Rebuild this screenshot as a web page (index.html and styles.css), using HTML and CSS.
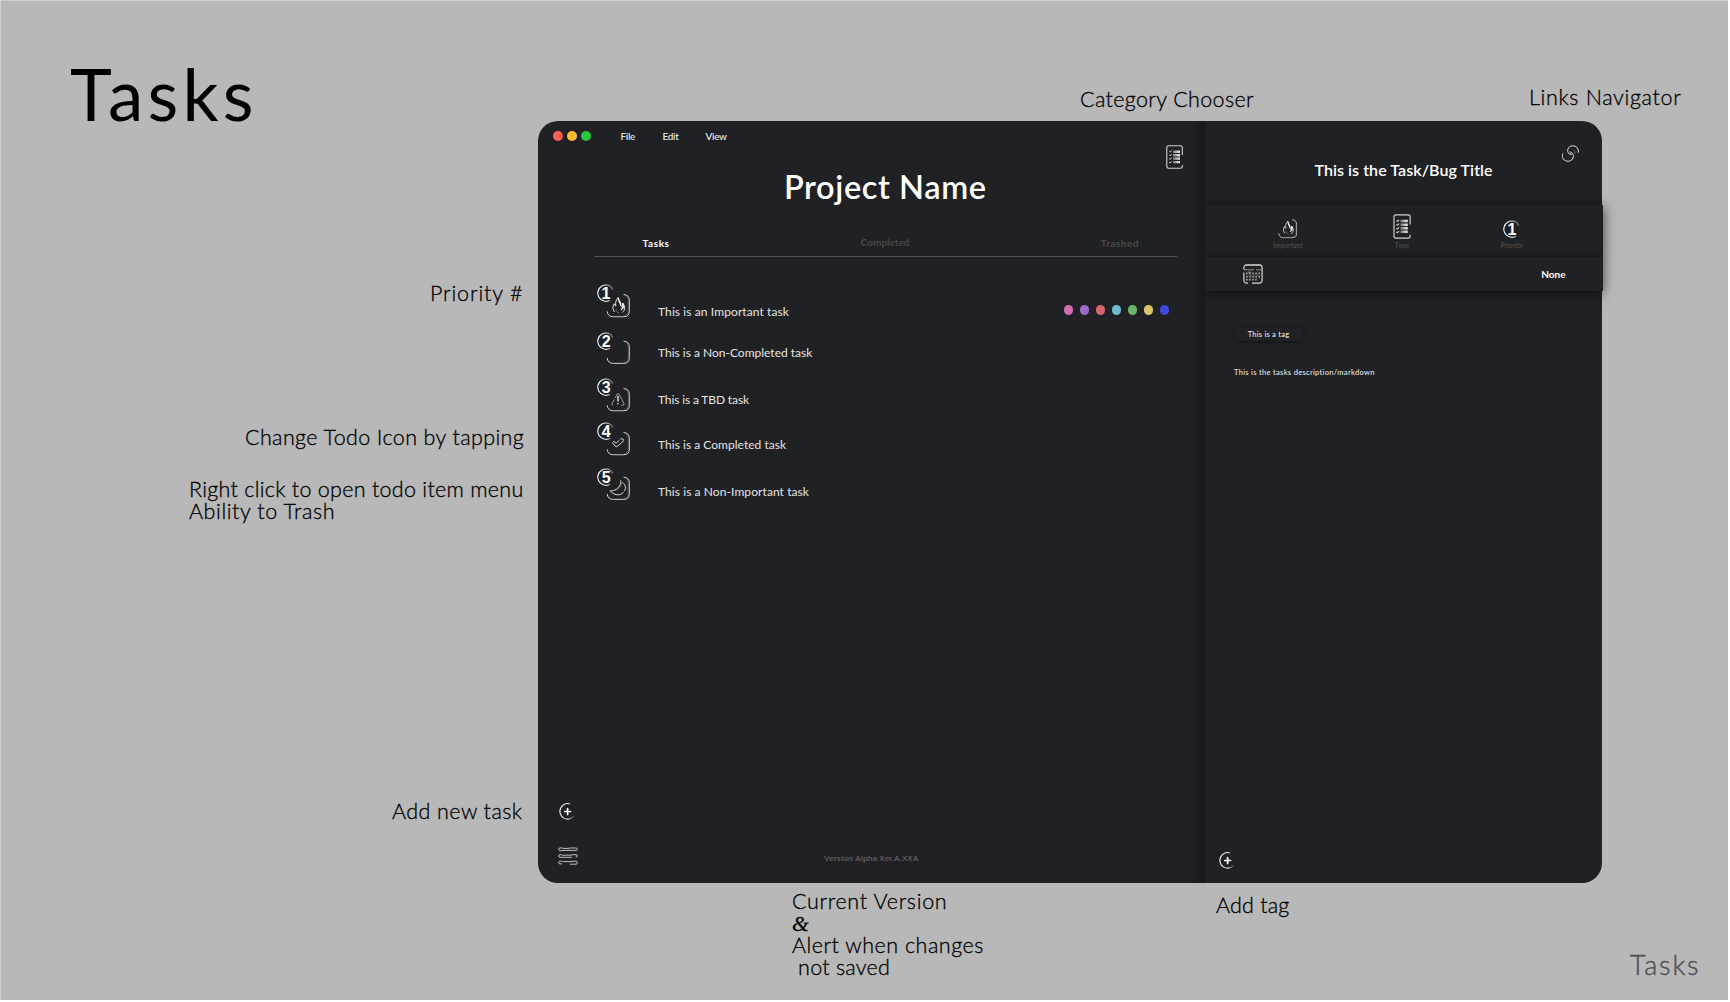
FILE: index.html
```
<!DOCTYPE html>
<html lang="en">
<head>
<meta charset="utf-8">
<title>Tasks</title>
<link rel="stylesheet" href="styles.css">
</head>
<body>
<svg class="defs" width="0" height="0" aria-hidden="true">
  <defs>
    <linearGradient id="fade" x1="0" y1="0" x2="1" y2="0">
      <stop offset="0" stop-color="#fff"/><stop offset=".55" stop-color="#ddd"/><stop offset="1" stop-color="#fff" stop-opacity=".15"/>
    </linearGradient>
    <linearGradient id="rowfill" x1="0" y1="0" x2="1" y2="0">
      <stop offset="0" stop-color="#777"/><stop offset="1" stop-color="#f4f4f4"/>
    </linearGradient>
    <symbol id="ring" viewBox="0 0 18 18">
      <path d="M16.2 5.2A8.2 8.2 0 1 0 13.2 16.2" fill="none" stroke="url(#fade)" stroke-width="1.1"/>
      <path d="M13.5 2.9A7 7 0 0 1 15.4 5.8" fill="none" stroke="#bbb" stroke-width=".5"/>
    </symbol>
    <symbol id="box" viewBox="0 0 24 24">
      <path d="M17.3.8Q23 1.3 23 6.6V17.4Q23 23.1 17.2 23.1H7Q1.6 23.1.8 17.6" fill="none" stroke="#d4d5d5" stroke-width="1"/>
      <path d="M17.3.8Q21.6 2.2 21.9 6.6V17Q21.6 21.8 17 22" fill="none" stroke="#888" stroke-width=".4"/>
    </symbol>
    <symbol id="flame" viewBox="0 0 14 18">
      <path d="M2.6 15.4C.4 12.8.5 9.5 2.2 7.2M2.2 7.2C2.6 8.6 3.1 9.2 3.8 9.4 3.1 6 4 3.4 6.2 1M8.9 10.6C10.4 9.6 11 8.2 10.7 6.6M10.7 6.6C13.4 9.4 13.4 13.2 10.4 16" fill="none" stroke="#e6e6e6" stroke-width="1"/>
      <path d="M6.2 1C7.2 4.5 9.3 5.5 9 9.5 8.2 6.8 6.5 5.6 6.2 1ZM10.7 6.6C12.8 10 11.8 11.8 9 13.4 10.4 11.4 11.2 9.2 10.7 6.6Z" fill="#fff" stroke="#fff" stroke-width=".8"/>
      <path d="M4 12.2C4 14.5 5.2 16 7.4 16.6" fill="none" stroke="#888" stroke-width=".7"/>
    </symbol>
    <symbol id="warn" viewBox="0 0 14 14">
      <path d="M4.2 5.5 6.2 1.7Q7 .6 7.8 1.7L13 11.2Q13.6 12.8 12 12.8H10.4M3.3 7.2 1 11.2Q.5 12.6 2 12.8" fill="none" stroke="#aaa" stroke-width=".9"/>
      <path d="M7 3.8V9.2M7 10.8V12" stroke="#fff" stroke-width="1.3"/>
    </symbol>
    <symbol id="check" viewBox="0 0 13 10">
      <path d="M.8 4.4Q2 2.6 3.4 4.2L4.6 5.2 7.2 2.4M8.6 1.2Q10.4.2 12 1.4 12.3 2.8 11.2 3.8L5.8 8.2Q4.6 9.4 3.6 8.2L.9 5" fill="none" stroke="#d8d8d8" stroke-width="1"/>
    </symbol>
    <symbol id="moon" viewBox="0 0 17 17">
      <path d="M11.4.8C12 6.6 7.4 11.4.8 11.2 4.2 15.6 10.8 16.8 14.4 12.6M13 2.8C16.4 5 16.8 8 15.2 11.4" fill="none" stroke="#dcdcdc" stroke-width="1"/>
      <path d="M11.4.8C13.4 6.4 10.6 11.6.8 11.2" fill="none" stroke="#888" stroke-width=".5"/>
    </symbol>
    <symbol id="list" viewBox="0 0 17 24">
      <path d="M16.3 10V2.6Q16.3.8 14.4.8H2.6Q.8.8.8 2.6V21.2Q.8 23.2 2.6 23.2H14.4Q16.3 23.2 16.3 21.4V20" fill="none" stroke="#d4d4d4" stroke-width="1.1"/>
      <path d="M7 5.4H14V8H7ZM7 9.1H14V11.4H7ZM7 12.5H14V14.8H7ZM7 15.9H14V18.2H7Z" fill="url(#rowfill)"/>
      <path d="M3.2 6.4 4 7.2 5.8 5.6M3.2 10 4 10.8 5.8 9.2M3.2 13.6 4 14.4 5.8 12.8M3.2 17.2 4 18 5.8 16.4" fill="none" stroke="#ccc" stroke-width="1"/>
    </symbol>
    <symbol id="link" viewBox="0 0 17 17">
      <path d="M16.3 7.6A5.5 5.5 0 0 0 10.6.8C7 .9 4.8 4.4 6 7.4Q7 9.8 9.6 9.6M.8 8.4A5.5 5.5 0 0 0 6.2 16.2C10 16.2 12.3 12.6 11 9.4Q10 7 7.6 6.8" fill="none" stroke="#e2e2e2" stroke-width="1"/>
      <path d="M7.6 6.8 9.6 9.6M12 5.2Q13.4 6.6 13 8.6" fill="none" stroke="#999" stroke-width=".6"/>
    </symbol>
    <symbol id="plus" viewBox="0 0 17 17">
      <path d="M11 .9A7.8 7.8 0 1 0 15 13" fill="none" stroke="url(#fade)" stroke-width="1.1"/>
      <path d="M8.6 5.6V11.4M5.7 8.5H11.5" stroke="#fff" stroke-width="1.7" stroke-linecap="round"/>
    </symbol>
    <symbol id="menu" viewBox="0 0 20 18">
      <path d="M5 1H2Q.6 1 .6 2.2.6 3.7 2 3.7H4L6 3.4H18.4M5 1.4H10L12 1H18Q19.3 1 19.3 2.4L18.8 3.8M3.6 7.7H2Q.6 7.7.6 9 .6 10.3 2 10.3H14M4 8.2H13L15 7.7H18Q19.4 7.7 19.4 9.2 19.2 10.2 17.6 10.2M4.6 14.2H2Q.6 14.2.6 15.6.6 16.9 2 16.9H4M5 14.6H13L15 14.2H18Q19.4 14.2 19.4 15.8 19.2 17.2 18 17.2H12" fill="none" stroke="#dcdcdc" stroke-width=".85"/>
    </symbol>
    <symbol id="calendar" viewBox="0 0 20 20">
      <path d="M.9 5.6V4Q.9.9 4 .9H16Q19.1.9 19.1 4V16Q19.1 19.1 16 19.1H9M5 19.1H4Q.9 19.1.9 16V8.4" fill="none" stroke="#d6d6d6" stroke-width="1.2"/>
      <path d="M2 1.2H18" stroke="#aeb4b0" stroke-width="1.2"/>
      <path d="M1 5.8H11M13 5.8H19M5 8.2H8" stroke="#aaa" stroke-width=".8"/>
      <path d="M3 9.4H17.4M3 12.6H17M3 15.8H13.6" stroke="#a8a8a8" stroke-width="1.6" stroke-dasharray="1.6 1.5"/>
      <path d="M4.6 11H17M3.4 14.2H17" stroke="#777" stroke-width=".9" stroke-dasharray="1.2 1.9"/>
    </symbol>
  </defs>
</svg>

<main class="board">
  <h1 class="board-title">Tasks</h1>

  <p class="note note-priority">Priority #</p>
  <p class="note note-category">Category Chooser</p>
  <p class="note note-links">Links Navigator</p>
  <p class="note note-icon">Change Todo Icon by tapping</p>
  <p class="note note-menu"><span class="ls-a">Right click to open todo item menu</span><br><span class="ls-b">Ability to Trash</span></p>
  <p class="note note-add">Add new task</p>
  <p class="note note-version"><span class="ls-c">Current Version</span><br><span class="script-amp">&amp;</span><br>Alert when changes<br><span class="ls-d">&nbsp;not saved</span></p>
  <p class="note note-tag">Add tag</p>
  <p class="board-name">Tasks</p>

  <div class="window">
    <section class="main-pane">
      <nav class="menubar">
        <span class="light light-red"></span><span class="light light-yellow"></span><span class="light light-green"></span>
        <span class="menu-item menu-file">File</span><span class="menu-item menu-edit">Edit</span><span class="menu-item menu-view">View</span>
      </nav>
      <div class="project">
        <svg class="category-icon" width="17" height="24"><use href="#list"/></svg>
        <h2 class="project-name">Project Name</h2>
        <div class="tabs">
          <span class="tab tab-active">Tasks</span><span class="tab tab-completed">Completed</span><span class="tab tab-trashed">Trashed</span>
        </div>
        <ul class="tasks">
          <li class="task task-1">
            <svg class="task-icon" width="34" height="36"><use href="#ring" x="0" y="0" width="18" height="18"/><text class="digit" x="4.6" y="15">1</text><use href="#box" x="9.3" y="9.7" width="24" height="24"/><use href="#flame" x="15" y="12.6" width="14" height="18"/></svg>
            <span class="task-text">This is an Important task</span>
            <span class="dots"><i class="dot pink"></i><i class="dot purple"></i><i class="dot red"></i><i class="dot cyan"></i><i class="dot green"></i><i class="dot yellow"></i><i class="dot blue"></i></span>
          </li>
          <li class="task task-2">
            <svg class="task-icon" width="34" height="36"><use href="#ring" width="18" height="18"/><text class="digit" x="4.8" y="15">2</text><use href="#box" x="9.3" y="8.3" width="24" height="24"/></svg>
            <span class="task-text">This is a Non-Completed task</span>
          </li>
          <li class="task task-3">
            <svg class="task-icon" width="34" height="36"><use href="#ring" width="18" height="18"/><text class="digit" x="4.8" y="15">3</text><use href="#box" x="9.3" y="9.7" width="24" height="24"/><use href="#warn" x="14" y="14.3" width="14" height="14"/></svg>
            <span class="task-text">This is a TBD task</span>
          </li>
          <li class="task task-4">
            <svg class="task-icon" width="34" height="36"><use href="#ring" width="18" height="18"/><text class="digit" x="4.8" y="15">4</text><use href="#box" x="9.3" y="9.7" width="24" height="24"/><use href="#check" x="14.6" y="16" width="13" height="10"/></svg>
            <span class="task-text">This is a Completed task</span>
          </li>
          <li class="task task-5">
            <svg class="task-icon" width="34" height="36"><use href="#ring" width="18" height="18"/><text class="digit" x="4.8" y="15">5</text><use href="#box" x="9.3" y="8.3" width="24" height="24"/><use href="#moon" x="12.3" y="11.6" width="17" height="17"/></svg>
            <span class="task-text">This is a Non-Important task</span>
          </li>
        </ul>
      </div>
      <footer class="main-footer">
        <div class="tools">
          <svg width="17" height="17"><use href="#plus"/></svg>
          <svg width="20" height="18"><use href="#menu"/></svg>
        </div>
        <span class="version">Version Alpha Xer.A.XXA</span>
      </footer>
    </section>

    <aside class="side-pane">
      <svg class="link-icon" width="17" height="17"><use href="#link"/></svg>
      <h3 class="task-title">This is the Task/Bug Title</h3>
      <div class="bar attributes">
        <div class="attribute"><svg width="20" height="20"><use href="#box" x="0" y="0" width="19.5" height="19.5"/><use href="#flame" x="4.5" y="1.5" width="12" height="15"/></svg><span>Important</span></div>
        <div class="attribute"><svg width="18" height="25"><use href="#list" width="18" height="25"/></svg><span>Type</span></div>
        <div class="attribute"><svg width="18" height="19"><use href="#ring" width="18" height="18"/><text class="digit" x="4.6" y="15">1</text></svg><span>Priority</span></div>
      </div>
      <div class="bar due">
        <svg width="20" height="20"><use href="#calendar"/></svg>
        <span class="due-value">None</span>
      </div>
      <span class="tag">This is a tag</span>
      <p class="description">This is the tasks description/markdown</p>
      <svg class="add-tag" width="17" height="17"><use href="#plus"/></svg>
    </aside>
  </div>
</main>
</body>
</html>
```
FILE: styles.css
```
* { box-sizing: border-box; }
body { margin: 0; background: #fff; font-family: Lato, "Noto Sans", sans-serif; overflow: hidden; }
h1, h2, h3, p, ul { margin: 0; padding: 0; font-weight: 400; }
svg { display: block; flex: none; }
.defs { position: absolute; }

.board { position: relative; width: 1728px; height: 1000px; background: #b8b8b8; border: solid #d2d2d2; border-width: 1px 0 0 1px; color: #000; }

/* Annotations placed freely on the board */
.board-title { position: absolute; left: 69px; top: 58px; font-size: 71px; line-height: 70px; letter-spacing: 4.2px; }
.note { position: absolute; font-size: 21.5px; line-height: 22px; font-weight: 300; white-space: nowrap; -webkit-text-stroke: .3px #000; }
.note-priority { left: 429px; top: 281px; letter-spacing: .85px; }
.note-category { left: 1079px; top: 87px; letter-spacing: .36px; }
.note-links { left: 1528px; top: 85px; letter-spacing: .66px; }
.note-icon { left: 244px; top: 425px; letter-spacing: .38px; }
.note-menu { left: 188px; top: 477px; }
.ls-a { letter-spacing: .28px; }
.ls-b { letter-spacing: .58px; }
.note-add { left: 391px; top: 799px; letter-spacing: .43px; }
.note-version { left: 791px; top: 889px; letter-spacing: .5px; }
.ls-c { letter-spacing: .68px; }
.ls-d { letter-spacing: .25px; }
.script-amp { font-family: "Liberation Serif", "Times New Roman", serif; font-style: italic; line-height: 20px; }
.note-tag { left: 1215px; top: 893px; letter-spacing: .2px; }
.board-name { position: absolute; left: 1629px; top: 950px; font-size: 27px; line-height: 27px; font-weight: 300; letter-spacing: 1.8px; color: #505050; -webkit-text-stroke: .4px #505050; }

/* App window */
.window { position: absolute; left: 536.5px; top: 120px; width: 1064.5px; height: 762px; border-radius: 20px; background: #202124; color: #fff; display: flex; }
.main-pane { width: 667.5px; display: flex; flex-direction: column; border-radius: 20px 0 0 20px; background: linear-gradient(to right, transparent 652px, #17181a 667px); }
.menubar { display: flex; align-items: center; height: 20px; margin: 5px 0 -1px 15px; font-size: 10px; font-weight: 500; letter-spacing: -.3px; color: #eee; }
.light { width: 10px; height: 10px; border-radius: 50%; margin-right: 4px; }
.light-red { background: #ff5f56; }
.light-yellow { background: #ffbd2e; }
.light-green { background: #27c93f; }
.menu-file { margin-left: 26px; width: 42px; }
.menu-edit { width: 43px; }

.project { margin: 0 28px 0 56px; display: flex; flex-direction: column; }
.category-icon { align-self: flex-end; margin: -.5px -6px .5px 0; }
.project-name { margin-top: 2px; text-align: center; font-size: 32.5px; line-height: 32px; font-weight: 600; letter-spacing: .6px; }
.tabs { display: flex; justify-content: space-between; align-items: flex-start; height: 21px; margin-top: 33px; padding: 0 38px 0 49px; border-bottom: 1px solid #515254; font-size: 10px; line-height: 12px; font-weight: 700; color: #47484a; }
.tab-active { color: #fff; letter-spacing: .6px; padding-top: 1px; }
.tab-trashed { letter-spacing: .5px; padding-top: 1px; }
.tasks { list-style: none; margin-top: 27px; display: grid; grid-template-rows: 48px 46px 44px 46px 46px; }
.task { display: flex; align-items: flex-start; padding-left: 3px; }
.task-icon { width: 34px; margin-right: 27.5px; }
.digit { font: 700 16px "Liberation Sans", Arial, sans-serif; fill: #fff; }
.task-text { flex: 1; font-size: 12px; line-height: 14px; color: #e4e4e4; }
.task-1 .task-text { margin-top: 21px; letter-spacing: .1px; }
.task-2 .task-text { margin-top: 14px; }
.task-3 .task-text { margin-top: 15px; letter-spacing: -.13px; }
.task-4 .task-text { margin-top: 16px; letter-spacing: .03px; }
.task-5 .task-text { margin-top: 17px; letter-spacing: .08px; }
.dots { display: flex; gap: 6.5px; margin: 21px 8px 0 0; }
.dot { width: 9.5px; height: 9.5px; border-radius: 50%; }
.pink { background: #cf6db0; }
.purple { background: #9b6dcb; }
.red { background: #d9666e; }
.cyan { background: #6cbccc; }
.green { background: #6ab56a; }
.yellow { background: #ddc466; }
.blue { background: #3f48e0; }

.main-footer { margin-top: auto; padding: 0 0 18px 20px; display: grid; grid-template-columns: 1fr auto 1fr; align-items: end; }
.tools { display: flex; flex-direction: column; align-items: center; gap: 27px; width: 20px; }
.version { margin: 0 0 1px -20px; font: 700 8px/10px "Liberation Sans", Arial, sans-serif; color: #58595b; }

/* Details of the selected task */
.side-pane { flex: 1; display: flex; flex-direction: column; align-items: stretch; min-width: 0; }
.link-icon { align-self: flex-end; margin: 23.5px 23px .5px 0; }
.task-title { margin-top: -1px; text-align: center; font-size: 16px; line-height: 18px; font-weight: 600; letter-spacing: .07px; }
.bar { width: 397.5px; background: #202124; box-shadow: 0 2px 12px rgba(0, 0, 0, .65); clip-path: inset(-20px -24px -24px 0); }
.attributes { margin-top: 26px; height: 52px; padding: 0 0 7px 26px; display: grid; grid-template-columns: 114px 114px 106px; }
.attribute { display: flex; flex-direction: column; align-items: center; justify-content: flex-end; gap: 3px; font-size: 6.5px; line-height: 8px; font-weight: 700; color: #48494b; letter-spacing: .1px; }
.due { height: 34px; padding: 0 37px 0 38px; display: flex; align-items: center; justify-content: space-between; }
.due-value { font-size: 10px; font-weight: 700; margin-top: -1px; }
.tag { width: 69px; height: 14px; margin: 36px 0 0 29px; border-radius: 7px; text-align: center; font-size: 7.5px; line-height: 15px; font-weight: 500; letter-spacing: .24px; color: #ececec; box-shadow: 0 1px 4px rgba(0, 0, 0, .5); }
.description { margin: 27px 0 0 29px; font-size: 7.5px; line-height: 9px; font-weight: 500; letter-spacing: .31px; color: #e4e4e4; }
.add-tag { margin: auto 0 14px 14px; }
```
